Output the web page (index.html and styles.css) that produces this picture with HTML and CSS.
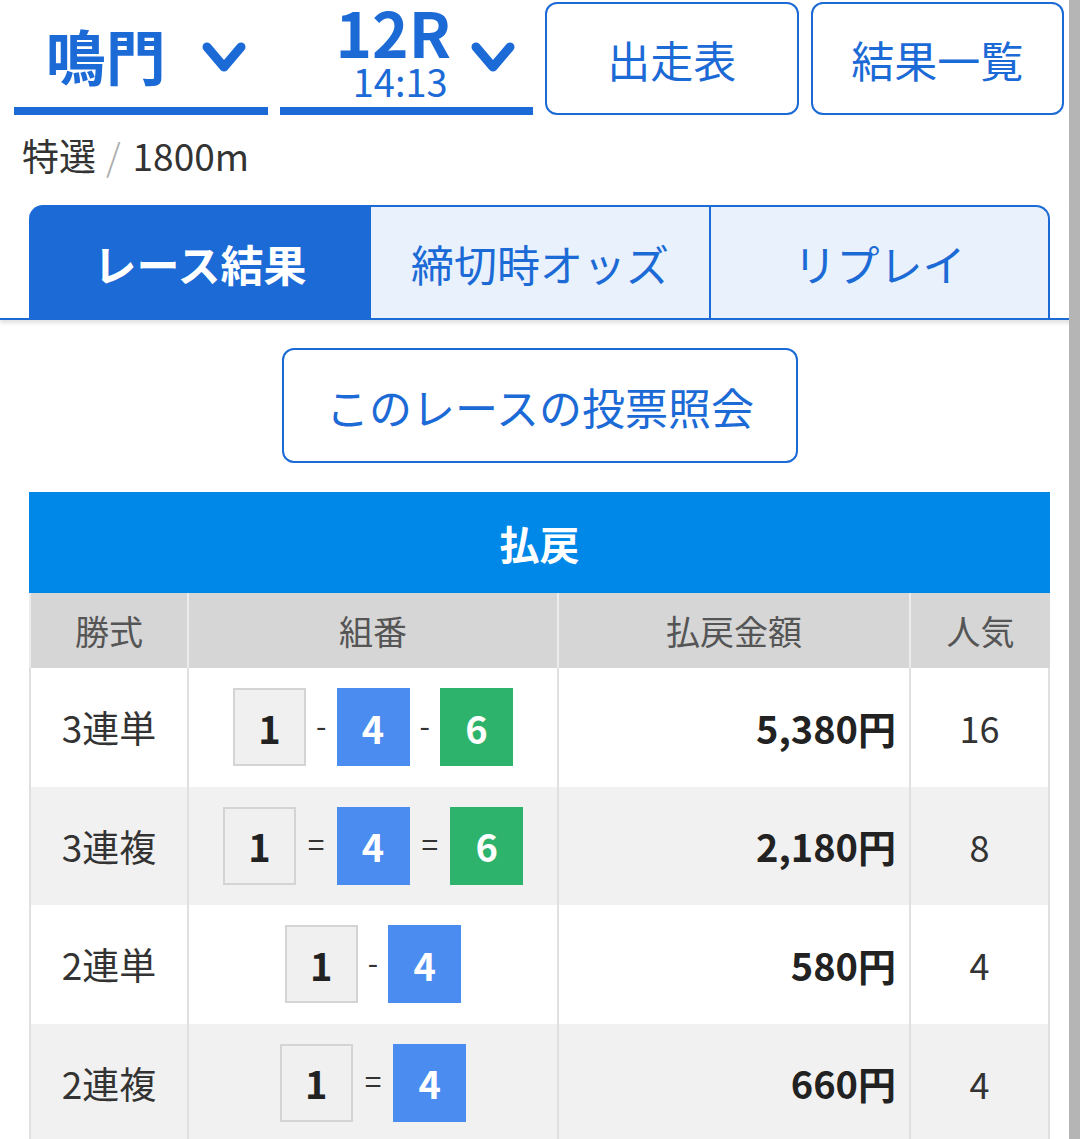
FILE: index.html
```html
<!DOCTYPE html>
<html lang="ja">
<head>
<meta charset="utf-8">
<title>鳴門 12R レース結果</title>
<link rel="stylesheet" href="styles.css">
</head>
<body>
<div class="page">
  <header class="top">
    <div class="sel venue">
      <span class="venue-name">鳴門</span>
      <svg class="chev" viewBox="0 0 44 31" width="44" height="31"><polyline points="5,5 22,25 39,5"/></svg>
    </div>
    <div class="sel race">
      <div class="race-main">
        <span class="race-no">12R</span>
        <span class="race-time">14:13</span>
      </div>
      <svg class="chev" viewBox="0 0 44 31" width="44" height="31"><polyline points="5,5 22,25 39,5"/></svg>
    </div>
    <a class="btn-top">出走表</a>
    <a class="btn-top">結果一覧</a>
  </header>

  <div class="race-info">特選<span class="sep">/</span>1800m</div>

  <nav class="tabs">
    <div class="tab active">レース結果</div>
    <div class="tab mid">締切時オッズ</div>
    <div class="tab last">リプレイ</div>
  </nav>

  <div class="inquiry-row">
    <a class="inquiry">このレースの投票照会</a>
  </div>

  <table class="payout">
    <colgroup>
      <col class="c1"><col class="c2"><col class="c3"><col class="c4">
    </colgroup>
    <thead>
      <tr><th class="band" colspan="4">払戻</th></tr>
      <tr class="head">
        <th>勝式</th><th>組番</th><th>払戻金額</th><th>人気</th>
      </tr>
    </thead>
    <tbody>
      <tr>
        <td class="kind">3連単</td>
        <td><div class="combo"><span class="box b1">1</span><span class="op">-</span><span class="box b4">4</span><span class="op">-</span><span class="box b6">6</span></div></td>
        <td class="amount">5,380円</td>
        <td class="pop">16</td>
      </tr>
      <tr>
        <td class="kind">3連複</td>
        <td><div class="combo"><span class="box b1">1</span><span class="op eq">=</span><span class="box b4">4</span><span class="op eq">=</span><span class="box b6">6</span></div></td>
        <td class="amount">2,180円</td>
        <td class="pop">8</td>
      </tr>
      <tr>
        <td class="kind">2連単</td>
        <td><div class="combo"><span class="box b1">1</span><span class="op">-</span><span class="box b4">4</span></div></td>
        <td class="amount">580円</td>
        <td class="pop">4</td>
      </tr>
      <tr>
        <td class="kind">2連複</td>
        <td><div class="combo"><span class="box b1">1</span><span class="op eq">=</span><span class="box b4">4</span></div></td>
        <td class="amount">660円</td>
        <td class="pop">4</td>
      </tr>
    </tbody>
  </table>
</div>
<div class="scrollbar"></div>
</body>
</html>
```

FILE: styles.css
```css
html {
  overflow: hidden;
}
body {
  margin: 0;
  font-family: "Noto Sans CJK JP", "Noto Sans", sans-serif;
  color: #333;
  background: #fff;
}

.top {
  display: grid;
  grid-template-columns: repeat(4, 1fr);
  column-gap: 12px;
  padding: 2px 16px 0 14px;
  height: 113px;
}

.sel {
  display: flex;
  align-items: center;
  justify-content: center;
  border-bottom: 8px solid #1b6ad6;
  color: #1b6ad6;
}
.venue {
  gap: 36px;
  padding-left: 10px;
}
.race {
  gap: 20px;
  padding-left: 38px;
}
.venue-name {
  font-size: 60px;
  font-weight: 700;
  line-height: 1;
}
.chev {
  margin-top: 6px;
}
.chev polyline {
  fill: none;
  stroke: #1b6ad6;
  stroke-width: 9;
  stroke-linecap: round;
  stroke-linejoin: round;
}
.race-main {
  display: flex;
  flex-direction: column;
  align-items: center;
  padding-bottom: 6px;
}
.race-no {
  font-size: 62px;
  line-height: 50px;
  font-weight: 700;
}
.race-time {
  font-size: 38px;
  line-height: 34px;
  margin-top: 8px;
  padding-left: 14px;
}

.btn-top {
  display: flex;
  align-items: center;
  justify-content: center;
  border: 2px solid #1b6ad6;
  border-radius: 12px;
  color: #1b6ad6;
  font-size: 43px;
}

.race-info {
  margin-top: 20px;
  height: 40px;
  line-height: 40px;
  padding-left: 22px;
  font-size: 37px;
  color: #333;
}
.race-info .sep {
  color: #aaa;
  font-weight: 300;
  margin: 0 12px 0 10px;
}

.tabs {
  margin-top: 30px;
  display: flex;
  padding: 0 30px 0 29px;
  border-bottom: 2px solid #1b6ad6;
  box-shadow: 0 3px 4px rgba(0, 0, 0, 0.12);
}
.tab {
  height: 113px;
  box-sizing: border-box;
  display: flex;
  align-items: center;
  justify-content: center;
  font-size: 43px;
  color: #1b6ad6;
  background: #e8f1fc;
  border-top: 2px solid #1b6ad6;
}
.tab.active {
  flex: 0 0 342px;
  background: #1b6ad6;
  color: #fff;
  font-weight: 700;
  border-radius: 14px 0 0 0;
}
.tab.mid {
  flex: 0 0 340px;
  border-right: 2px solid #1b6ad6;
}
.tab.last {
  flex: 1;
  border-right: 2px solid #1b6ad6;
  border-radius: 0 14px 0 0;
}

.inquiry-row {
  display: flex;
  justify-content: center;
  padding-top: 28px;
}
.inquiry {
  width: 516px;
  height: 115px;
  box-sizing: border-box;
  display: flex;
  align-items: center;
  justify-content: center;
  border: 2px solid #1b6ad6;
  border-radius: 12px;
  color: #1b6ad6;
  font-size: 43px;
}

.payout {
  margin: 29px 0 0 29px;
  width: 1021px;
  table-layout: fixed;
  border-collapse: separate;
  border-spacing: 0;
}
.c1 { width: 160px; }
.c2 { width: 370px; }
.c3 { width: 352px; }
.c4 { width: 139px; }

.payout th,
.payout td {
  padding: 0;
  box-sizing: border-box;
}
.band {
  height: 101px;
  background: #0088e8;
  color: #fff;
  font-size: 40px;
  font-weight: 700;
}
.head th {
  height: 75px;
  background: #d6d6d6;
  color: #555;
  font-size: 34px;
  font-weight: 400;
  border-right: 2px solid #ececec;
}
.head th:first-child {
  border-left: 2px solid #ececec;
}
.head th:last-child {
  border-right: 0;
}

.payout td {
  height: 118.5px;
  border-right: 2px solid #e0e0e0;
  vertical-align: middle;
}
.payout td:first-child {
  border-left: 2px solid #e0e0e0;
}
.payout tbody tr:nth-child(even) td {
  background: #f1f1f1;
}
.kind {
  text-align: center;
  font-size: 37px;
  color: #333;
}
.payout td.amount {
  text-align: right;
  padding-right: 13px;
  font-size: 38px;
  font-weight: 700;
  color: #222;
}
.pop {
  text-align: center;
  font-size: 36px;
  color: #333;
}

.combo {
  display: flex;
  justify-content: center;
  align-items: center;
}
.box {
  width: 73px;
  height: 78px;
  box-sizing: border-box;
  display: flex;
  align-items: center;
  justify-content: center;
  font-size: 38px;
  font-weight: 700;
}
.b1 {
  background: #f0f0f0;
  border: 2px solid #d4d4d4;
  color: #222;
}
.b4 {
  background: #4a8cf0;
  color: #fff;
}
.b6 {
  background: #2db36c;
  color: #fff;
}
.op {
  font-size: 30px;
  color: #333;
  margin: 0 10px;
  line-height: 1;
  padding-bottom: 6px;
}
.op.eq {
  margin: 0 12px;
}

.scrollbar {
  position: fixed;
  top: 0;
  right: 0;
  width: 11px;
  height: 100%;
  background: #b5b5b5;
}
```
